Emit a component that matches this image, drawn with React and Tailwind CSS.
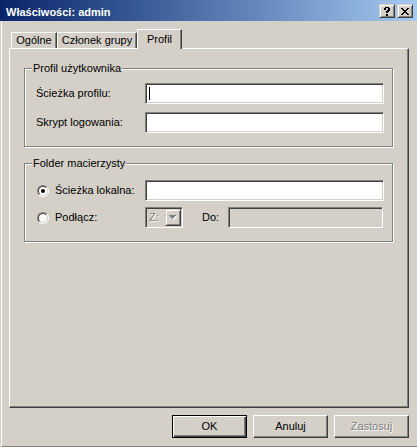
import React from "react";

function CapButton({ children }) {
  return (
    <div className="w-[16px] h-[14px] bg-[#D4D0C8] border border-t-[#D4D0C8] border-l-[#D4D0C8] border-r-[#404040] border-b-[#404040] shadow-[inset_1px_1px_0_#fff,inset_-1px_-1px_0_#808080] flex items-center justify-center">
      {children}
    </div>
  );
}

function CloseGlyph() {
  const rows = [
    [0, 1, 6, 7],
    [1, 2, 5, 6],
    [2, 3, 4, 5],
    [3, 4],
    [2, 3, 4, 5],
    [1, 2, 5, 6],
    [0, 1, 6, 7],
  ];
  return (
    <svg width="8" height="7" viewBox="0 0 8 7" shapeRendering="crispEdges">
      {rows.map((r, y) =>
        r.map((x) => <rect key={y + "-" + x} x={x} y={y} width="1" height="1" fill="#000" />)
      )}
    </svg>
  );
}

function HelpGlyph() {
  const px = [
    [1, 0], [2, 0], [3, 0], [4, 0],
    [0, 1], [1, 1], [4, 1], [5, 1],
    [0, 2], [1, 2], [4, 2], [5, 2],
    [3, 3], [4, 3], [5, 3],
    [2, 4], [3, 4], [4, 4],
    [2, 5], [3, 5],
    [2, 7], [3, 7],
    [2, 8], [3, 8],
  ];
  return (
    <svg width="6" height="9" viewBox="0 0 6 9" shapeRendering="crispEdges">
      {px.map(([x, y]) => (
        <rect key={x + "-" + y} x={x} y={y} width="1" height="1" fill="#000" />
      ))}
    </svg>
  );
}

function Group({ title, children }) {
  return (
    <div className="relative w-[369px] h-[79px] border border-[#808080] shadow-[inset_1px_1px_0_#fff,1px_1px_0_#fff]">
      <span className="absolute left-[7px] top-[-7px] px-[1px] bg-[#D4D0C8] leading-[13px] whitespace-nowrap">
        {title}
      </span>
      {children}
    </div>
  );
}

function Edit({ className, disabled, caret }) {
  return (
    <div
      className={
        "h-[21px] border border-t-[#808080] border-l-[#808080] border-r-white border-b-white shadow-[inset_1px_1px_0_#404040,inset_-1px_-1px_0_#D4D0C8] flex items-center " +
        (disabled ? "bg-[#D4D0C8] " : "bg-white ") +
        className
      }
    >
      {caret && <div className="ml-[3px] w-px h-[13px] bg-black" />}
    </div>
  );
}

function Radio({ checked }) {
  return (
    <div className="w-[12px] h-[12px] shrink-0 rounded-full border border-t-[#808080] border-l-[#808080] border-r-white border-b-white">
      <div className="w-full h-full rounded-full border border-t-[#404040] border-l-[#404040] border-r-[#D4D0C8] border-b-[#D4D0C8] bg-white flex items-center justify-center">
        {checked && <div className="w-[4px] h-[4px] rounded-full bg-black" />}
      </div>
    </div>
  );
}

function ArrowGlyph() {
  const rows = [
    [0, 7],
    [1, 5],
    [2, 3],
    [3, 1],
  ];
  return (
    <svg width="8" height="5" viewBox="0 0 8 5" shapeRendering="crispEdges">
      {rows.map(([x, w], y) => (
        <rect key={"w" + y} x={x + 1} y={y + 1} width={w} height="1" fill="#fff" />
      ))}
      {rows.map(([x, w], y) => (
        <rect key={"g" + y} x={x} y={y} width={w} height="1" fill="#808080" />
      ))}
    </svg>
  );
}

function Combo() {
  return (
    <div className="w-[38px] h-[21px] flex border border-t-[#808080] border-l-[#808080] border-r-white border-b-white shadow-[inset_1px_1px_0_#404040,inset_-1px_-1px_0_#D4D0C8] bg-[#D4D0C8] p-[1px]">
      <div className="flex-1 flex items-center pl-[2px] text-[#808080] [text-shadow:1px_1px_0_#fff]">
        Z:
      </div>
      <div className="w-[16px] h-full border border-t-[#D4D0C8] border-l-[#D4D0C8] border-r-[#404040] border-b-[#404040] shadow-[inset_1px_1px_0_#fff,inset_-1px_-1px_0_#808080] flex items-center justify-center">
        <ArrowGlyph />
      </div>
    </div>
  );
}

function Button({ children, isDefault, disabled }) {
  if (isDefault) {
    return (
      <div className="w-[75px] h-[23px] border border-black">
        <div className="w-full h-full shadow-[inset_1px_1px_0_#fff,inset_-1px_-1px_0_#404040,inset_-2px_-2px_0_#808080] flex items-center justify-center">
          {children}
        </div>
      </div>
    );
  }
  return (
    <div
      className={
        "w-[75px] h-[23px] border border-t-white border-l-white border-r-[#404040] border-b-[#404040] shadow-[inset_-1px_-1px_0_#808080] flex items-center justify-center " +
        (disabled ? "text-[#808080] [text-shadow:1px_1px_0_#fff]" : "")
      }
    >
      {children}
    </div>
  );
}

function Tab({ children, selected, width }) {
  if (selected) {
    return (
      <div
        className={
          "h-[20px] -mb-px relative z-10 bg-[#D4D0C8] border-t border-l border-r border-t-white border-l-white border-r-[#404040] shadow-[inset_-1px_0_0_#808080] flex justify-center pt-[3px] " +
          width
        }
      >
        {children}
      </div>
    );
  }
  return (
    <div
      className={
        "h-[16px] bg-[#D4D0C8] border-t border-l border-r border-t-white border-l-white border-r-[#404040] shadow-[inset_-1px_0_0_#808080] flex items-center justify-center " +
        width
      }
    >
      {children}
    </div>
  );
}

export default function App() {
  return (
    <div className="w-[417px] h-[447px] bg-[#D4D0C8] flex flex-col overflow-hidden font-['Liberation_Sans',Arial,sans-serif] text-[11px] leading-[13px] text-black select-none">
      {/* Title bar */}
      <div className="h-[21px] shrink-0 flex items-start justify-between bg-gradient-to-r from-[#0A246A] to-[#A6CAF0] pl-[6px] pr-[4px]">
        <span className="mt-[6px] text-white font-bold text-[11px] leading-[13px]">
          Właściwości: admin
        </span>
        <div className="flex gap-[2px] mt-[4px]">
          <CapButton>
            <HelpGlyph />
          </CapButton>
          <CapButton>
            <CloseGlyph />
          </CapButton>
        </div>
      </div>

      {/* Body */}
      <div className="flex-1 ml-px border-l border-white border-b border-b-[#808080] flex flex-col">
        {/* Tabs */}
        <div className="flex items-end h-[19px] mt-[8px] ml-[9px] relative z-10">
          <Tab width="w-[46px]">Ogólne</Tab>
          <Tab width="w-[80px]">Członek grupy</Tab>
          <Tab width="w-[45px]" selected>
            Profil
          </Tab>
        </div>

        {/* Panel */}
        <div className="w-[400px] h-[360px] ml-[7px] border border-t-white border-l-white border-r-[#404040] border-b-[#404040] shadow-[inset_-1px_-1px_0_#808080] flex flex-col pl-[14px] pt-[19px]">
          <Group title="Profil użytkownika">
            <div className="grid grid-cols-[109px_239px] gap-y-[8px] items-center pl-[11px] pt-[14px]">
              <span>Ścieżka profilu:</span>
              <Edit className="w-[239px]" caret />
              <span>Skrypt logowania:</span>
              <Edit className="w-[239px]" />
            </div>
          </Group>

          <div className="mt-[16px]">
            <Group title="Folder macierzysty">
              <div className="flex flex-col gap-[6px] pl-[12px] pt-[16px]">
                <div className="flex items-center">
                  <div className="w-[108px] flex items-center gap-[6px]">
                    <Radio checked />
                    <span>Ścieżka lokalna:</span>
                  </div>
                  <Edit className="w-[239px]" />
                </div>
                <div className="flex items-center">
                  <div className="w-[108px] flex items-center gap-[6px]">
                    <Radio />
                    <span>Podłącz:</span>
                  </div>
                  <Combo />
                  <span className="ml-[19px] w-[26px]">Do:</span>
                  <Edit className="w-[155px]" disabled />
                </div>
              </div>
            </Group>
          </div>
        </div>

        {/* Buttons */}
        <div className="flex justify-end gap-[6px] mt-[7px] pr-[8px]">
          <Button isDefault>OK</Button>
          <Button>Anuluj</Button>
          <Button disabled>Zastosuj</Button>
        </div>
      </div>
    </div>
  );
}
